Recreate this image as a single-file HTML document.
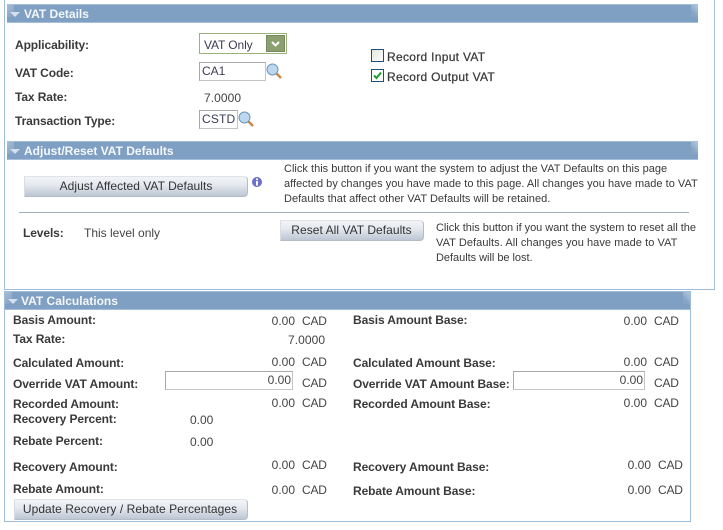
<!DOCTYPE html>
<html><head><meta charset="utf-8">
<style>
html,body{margin:0;padding:0;background:#fff;width:723px;height:530px;overflow:hidden}
body{position:relative;font-family:"Liberation Sans",Arial,sans-serif;font-size:12px;color:#444}
.a{position:absolute;white-space:nowrap;line-height:14px}
.l{font-weight:bold;color:#3a3a3a;font-size:12px;letter-spacing:-.1px}
.v{color:#444}
.r{text-align:right}
.bar{position:absolute;background:#7f9fc3;border-top:1px solid #a3bfdc;border-bottom:1px solid #a3bfdc;box-sizing:border-box}
.bar b{position:absolute;top:2px;color:#f4f7fb;font-size:12px;line-height:14px;white-space:nowrap}
.bar i{position:absolute;width:0;height:0;border-left:5px solid transparent;border-right:5px solid transparent;border-top:5px solid #d5e0ec}
.bar u{position:absolute;top:0;width:7px;height:12px;background:linear-gradient(135deg,#a9bdd6,#7f9fc3)}
.bar s{position:absolute;top:0;right:0;width:7px;height:12px;background:linear-gradient(225deg,#b4c8de,#86a4c6 70%)}
.line{position:absolute;background:#9fbcd9}
.inp{position:absolute;box-sizing:border-box;background:#fff;border:1px solid #a8a8a8;border-right-color:#c4c4c4;border-bottom-color:#c4c4c4;color:#3c3c55;line-height:16px;padding-left:2px;white-space:nowrap}
.btn{position:absolute;box-sizing:border-box;text-align:center;color:#333;border:1px solid #b4bcc8;border-top-color:#e0e4ea;border-left-color:#d8dce4;border-radius:0 4px 4px 0;background:linear-gradient(#f2f4f7 0,#e6e9ef 40%,#bcc6d4 100%);line-height:19px;white-space:nowrap}
.cb{position:absolute;box-sizing:border-box;width:13px;height:13px;border:1px solid #1c4f7c;background:linear-gradient(135deg,#e4e4e0,#fff)}
.d{font-size:11px;line-height:14.8px;color:#3a3a3a;letter-spacing:.02px}
.rec{font-weight:normal;-webkit-text-stroke:.25px #3a3a3a;letter-spacing:.3px;color:#3a3a3a}
</style></head><body>

<div class="line" style="left:4px;top:0;width:1px;height:290px"></div>
<div class="line" style="left:714px;top:0;width:1px;height:290px"></div>
<div class="line" style="left:4px;top:289px;width:711px;height:1px"></div>

<div class="bar" style="left:7px;top:4px;width:691px;height:19px"><u style="left:0"></u><s></s><i style="left:3px;top:7px"></i><b style="left:17px">VAT Details</b></div>

<div class="a l" style="left:15px;top:38px">Applicability:</div>
<div class="a" style="left:199px;top:33px;width:88px;height:21px;box-sizing:border-box;border:1px solid #9cb27c;background:#fff"></div>
<div class="a v" style="left:204px;top:38px;color:#3c3c55;letter-spacing:-.1px">VAT Only</div>
<div class="a" style="left:266px;top:35px;width:19px;height:17px;box-sizing:border-box;background:#8c9f70;border:1px solid #76895c"></div>
<svg class="a" style="left:271px;top:41px" width="10" height="6"><path d="M1 1 L4.5 4.5 L8 1" fill="none" stroke="#fff" stroke-width="2"/></svg>

<div class="a l" style="left:15px;top:66px">VAT Code:</div>
<div class="inp" style="left:199px;top:62px;width:67px;height:19px">CA1</div>
<svg class="a" style="left:266px;top:63px" width="16" height="16"><circle cx="6.5" cy="6.5" r="5.5" fill="#bcd7ef" stroke="#6f96ba"/><path d="M10.5 10.5 L15 15" stroke="#c8894a" stroke-width="2.6"/></svg>

<div class="a l" style="left:15px;top:90px">Tax Rate:</div>
<div class="a v" style="left:204px;top:91px;letter-spacing:.08px">7.0000</div>

<div class="a l" style="left:15px;top:114px">Transaction Type:</div>
<div class="inp" style="left:199px;top:110px;width:39px;height:19px;letter-spacing:.15px">CSTD</div>
<svg class="a" style="left:238px;top:111px" width="16" height="16"><circle cx="6.5" cy="6.5" r="5.5" fill="#bcd7ef" stroke="#6f96ba"/><path d="M10.5 10.5 L15 15" stroke="#c8894a" stroke-width="2.6"/></svg>

<div class="cb" style="left:371px;top:49px"></div>
<div class="a rec" style="left:387px;top:50px">Record Input VAT</div>
<div class="cb" style="left:371px;top:69px;background:#fff"></div>
<svg class="a" style="left:372px;top:70px" width="11" height="11"><path d="M2 5.5 L4.5 8 L9 2.5" fill="none" stroke="#1e9a2e" stroke-width="2"/></svg>
<div class="a rec" style="left:387px;top:70px">Record Output VAT</div>

<div class="bar" style="left:7px;top:141px;width:691px;height:19px"><u style="left:0"></u><s></s><i style="left:3px;top:7px"></i><b style="left:17px">Adjust/Reset VAT Defaults</b></div>

<div class="btn" style="left:24px;top:176px;width:224px;height:21px;letter-spacing:.03px">Adjust Affected VAT Defaults</div>
<svg class="a" style="left:252px;top:177px" width="10" height="10"><circle cx="5" cy="5" r="5" fill="#6a6fd0"/><rect x="4" y="4" width="2" height="4.5" fill="#fff"/><rect x="4" y="1.5" width="2" height="1.6" fill="#fff"/></svg>

<div class="a d" style="left:284px;top:162px">Click this button if you want the system to adjust the VAT Defaults on this page<br>affected by changes you have made to this page. All changes you have made to VAT<br>Defaults that affect other VAT Defaults will be retained.</div>

<div style="position:absolute;left:19px;top:212px;width:670px;height:1px;background:#a4adc0"></div>

<div class="a l" style="left:23px;top:226px">Levels:</div>
<div class="a v" style="left:84px;top:226px">This level only</div>
<div class="btn" style="left:280px;top:220px;width:144px;height:21px;letter-spacing:.05px;text-indent:-1px">Reset All VAT Defaults</div>
<div class="a d" style="left:436px;top:221px;letter-spacing:-.03px">Click this button if you want the system to reset all the<br><span style="letter-spacing:.06px">VAT Defaults. All changes you have made to VAT</span><br>Defaults will be lost.</div>

<div class="line" style="left:4px;top:291px;width:1px;height:231px"></div>
<div class="line" style="left:690px;top:291px;width:1px;height:231px"></div>
<div class="line" style="left:4px;top:521px;width:687px;height:1px"></div>

<div class="bar" style="left:5px;top:291px;width:685px;height:19px"><u style="left:0"></u><s></s><i style="left:3px;top:7px"></i><b style="left:16px">VAT Calculations</b></div>

<div class="a l" style="left:13px;top:313px">Basis Amount:</div>
<div class="a v r" style="left:255px;top:314px;width:40px">0.00</div><div class="a v" style="left:302px;top:314px;letter-spacing:-.2px">CAD</div>
<div class="a l" style="left:353px;top:313px">Basis Amount Base:</div>
<div class="a v r" style="left:607px;top:314px;width:40px">0.00</div><div class="a v" style="left:654px;top:314px;letter-spacing:-.2px">CAD</div>

<div class="a l" style="left:13px;top:332px">Tax Rate:</div>
<div class="a v" style="left:288px;top:333px;letter-spacing:.08px">7.0000</div>

<div class="a l" style="left:13px;top:356px">Calculated Amount:</div>
<div class="a v r" style="left:255px;top:355px;width:40px">0.00</div><div class="a v" style="left:302px;top:355px;letter-spacing:-.2px">CAD</div>
<div class="a l" style="left:353px;top:356px">Calculated Amount Base:</div>
<div class="a v r" style="left:607px;top:355px;width:40px">0.00</div><div class="a v" style="left:654px;top:355px;letter-spacing:-.2px">CAD</div>

<div class="a l" style="left:13px;top:377px">Override VAT Amount:</div>
<div class="inp" style="left:165px;top:371px;width:128px;height:19px;text-align:right;padding-right:1px;color:#444">0.00</div>
<div class="a v" style="left:302px;top:376px;letter-spacing:-.2px">CAD</div>
<div class="a l" style="left:353px;top:377px">Override VAT Amount Base:</div>
<div class="inp" style="left:513px;top:371px;width:132px;height:19px;text-align:right;padding-right:1px;color:#444">0.00</div>
<div class="a v" style="left:654px;top:376px;letter-spacing:-.2px">CAD</div>

<div class="a l" style="left:13px;top:397px">Recorded Amount:</div>
<div class="a v r" style="left:255px;top:396px;width:40px">0.00</div><div class="a v" style="left:302px;top:396px;letter-spacing:-.2px">CAD</div>
<div class="a l" style="left:353px;top:397px">Recorded Amount Base:</div>
<div class="a v r" style="left:607px;top:396px;width:40px">0.00</div><div class="a v" style="left:654px;top:396px;letter-spacing:-.2px">CAD</div>

<div class="a l" style="left:13px;top:412px">Recovery Percent:</div>
<div class="a v" style="left:190px;top:413px">0.00</div>
<div class="a l" style="left:13px;top:434px">Rebate Percent:</div>
<div class="a v" style="left:190px;top:435px">0.00</div>

<div class="a l" style="left:13px;top:460px">Recovery Amount:</div>
<div class="a v r" style="left:255px;top:458px;width:40px">0.00</div><div class="a v" style="left:302px;top:458px;letter-spacing:-.2px">CAD</div>
<div class="a l" style="left:353px;top:460px">Recovery Amount Base:</div>
<div class="a v r" style="left:611px;top:458px;width:40px">0.00</div><div class="a v" style="left:658px;top:458px;letter-spacing:-.2px">CAD</div>

<div class="a l" style="left:13px;top:482px">Rebate Amount:</div>
<div class="a v r" style="left:255px;top:483px;width:40px">0.00</div><div class="a v" style="left:302px;top:483px;letter-spacing:-.2px">CAD</div>
<div class="a l" style="left:353px;top:484px">Rebate Amount Base:</div>
<div class="a v r" style="left:611px;top:483px;width:40px">0.00</div><div class="a v" style="left:658px;top:483px;letter-spacing:-.2px">CAD</div>

<div class="btn" style="left:14px;top:499px;width:234px;height:21px;letter-spacing:.06px;text-indent:-2px">Update Recovery / Rebate Percentages</div>

</body></html>
